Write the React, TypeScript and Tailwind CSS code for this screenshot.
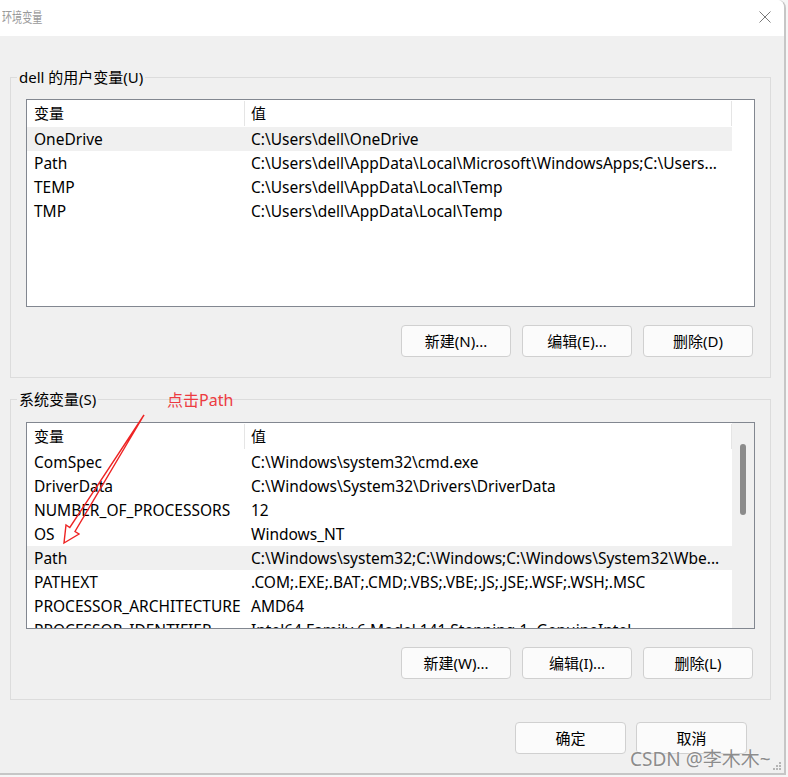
import React from 'react';

const userVars: [string, string][] = [
  ['OneDrive', 'C:\\Users\\dell\\OneDrive'],
  ['Path', 'C:\\Users\\dell\\AppData\\Local\\Microsoft\\WindowsApps;C:\\Users...'],
  ['TEMP', 'C:\\Users\\dell\\AppData\\Local\\Temp'],
  ['TMP', 'C:\\Users\\dell\\AppData\\Local\\Temp'],
];

const sysVars: [string, string][] = [
  ['ComSpec', 'C:\\Windows\\system32\\cmd.exe'],
  ['DriverData', 'C:\\Windows\\System32\\Drivers\\DriverData'],
  ['NUMBER_OF_PROCESSORS', '12'],
  ['OS', 'Windows_NT'],
  ['Path', 'C:\\Windows\\system32;C:\\Windows;C:\\Windows\\System32\\Wbe...'],
  ['PATHEXT', '.COM;.EXE;.BAT;.CMD;.VBS;.VBE;.JS;.JSE;.WSF;.WSH;.MSC'],
  ['PROCESSOR_ARCHITECTURE', 'AMD64'],
  ['PROCESSOR_IDENTIFIER', 'Intel64 Family 6 Model 141 Stepping 1, GenuineIntel'],
];

const Btn = ({ label, w = 'w-[110px]' }: { label: string; w?: string }) => (
  <button className={`${w} h-[32px] rounded-[4px] border border-[#d0d0d0] bg-[#fbfbfb] text-[15px] text-black`}>
    {label}
  </button>
);

const ListView = ({
  rows,
  selected,
  height,
  scrollbar,
}: {
  rows: [string, string][];
  selected: number;
  height: string;
  scrollbar?: boolean;
}) => (
  <div className={`${height} flex overflow-hidden border border-[#828790] bg-white text-[15.5px]`}>
    <div className="w-[705px] shrink-0">
      <div className="flex h-[27px] text-[15px]">
        <div className="flex w-[218px] items-center border-r border-[#e5e5e5] pl-[7px] my-[1px]">变量</div>
        <div className="flex w-[487px] items-center border-r border-[#e5e5e5] pl-[6px] my-[1px]">值</div>
      </div>
      {rows.map(([name, value], i) => (
        <div
          key={name}
          className={`flex h-[24px] items-center whitespace-nowrap pt-[2px] ${i === selected ? 'bg-[#f0f0f0]' : ''}`}
        >
          <div className="w-[218px] shrink-0 overflow-hidden pl-[7px]">{name}</div>
          <div className="flex-1 overflow-hidden pl-[6px]">{value}</div>
        </div>
      ))}
    </div>
    {scrollbar && (
      <div className="w-[22px] bg-[#f0f0f0] pt-[21px] pl-[8px]">
        <div className="h-[71px] w-[6px] rounded-[3px] bg-[#8b8b8b]" />
      </div>
    )}
  </div>
);

export default function App() {
  return (
    <div className="h-[777px] w-[788px] bg-[#f6f6f6] font-['Noto_Sans','Noto_Sans_CJK_SC',sans-serif] text-[15px] text-black">
      <div className="relative flex h-[775px] w-[786px] flex-col overflow-hidden rounded-tr-[8px] border-r-2 border-b-2 border-[#c6c6c6]">
        {/* title bar */}
        <div className="flex h-[36px] items-center justify-between bg-white pl-[2px] pr-[13px]">
          <span className="mb-[3px] inline-block origin-left scale-x-[0.72] text-[14px] text-[#9a9a9a]">环境变量</span>
          <svg width="12" height="12" viewBox="0 0 12 12" className="mb-[2px]">
            <path d="M0.5 0.5 L11.5 11.5 M11.5 0.5 L0.5 11.5" stroke="#7a7a7a" strokeWidth="1" />
          </svg>
        </div>

        <div className="flex-1 bg-[#f0f0f0] pt-[31px] pl-[10px]">
          <fieldset className="w-[761px] border border-[#dcdcdc] px-[15px] pt-[12px] pb-[20px]">
            <legend className="ml-[-9px] px-[2px] leading-[20px]">dell 的用户变量(U)</legend>
            <ListView rows={userVars} selected={0} height="h-[208px]" />
            <div className="mt-[18px] flex justify-end gap-[11px] pr-[2px]">
              <Btn label="新建(N)..." />
              <Btn label="编辑(E)..." />
              <Btn label="删除(D)" />
            </div>
          </fieldset>

          <fieldset className="mt-[11px] w-[761px] border border-[#dcdcdc] px-[15px] pt-[13px] pb-[20px]">
            <legend className="ml-[-9px] px-[2px] leading-[20px]">系统变量(S)</legend>
            <ListView rows={sysVars} selected={4} height="h-[207px]" scrollbar />
            <div className="mt-[18px] flex justify-end gap-[11px] pr-[2px]">
              <Btn label="新建(W)..." />
              <Btn label="编辑(I)..." />
              <Btn label="删除(L)" />
            </div>
          </fieldset>

          <div className="mt-[22px] flex justify-end gap-[10px] pr-[37px]">
            <Btn label="确定" w="w-[111px]" />
            <Btn label="取消" w="w-[111px]" />
          </div>
        </div>

        {/* annotation */}
        <span className="absolute left-[167px] top-[388px] text-[16px] text-[#ec3b41]">点击Path</span>
        <svg className="absolute left-0 top-0" width="786" height="775">
          <polygon
            points="144,415 75,531.5 79,534 64,543 66,525 69.8,527.5"
            fill="none"
            stroke="#ee2424"
            strokeWidth="1.4"
            strokeLinejoin="miter"
          />
        </svg>

        {/* watermark */}
        <span className="absolute left-[630px] top-[745px] text-[19px] text-[#8c8c8c] [text-shadow:0_0_2px_#fff]">
          CSDN @李木木~
        </span>
        <svg className="absolute right-[2px] bottom-[2px]" width="10" height="10">
          <rect x="7" y="1" width="2" height="2" fill="#b5b5b5" />
          <rect x="4" y="4" width="2" height="2" fill="#b5b5b5" />
          <rect x="7" y="4" width="2" height="2" fill="#b5b5b5" />
          <rect x="1" y="7" width="2" height="2" fill="#b5b5b5" />
          <rect x="4" y="7" width="2" height="2" fill="#b5b5b5" />
          <rect x="7" y="7" width="2" height="2" fill="#b5b5b5" />
        </svg>
      </div>
    </div>
  );
}
